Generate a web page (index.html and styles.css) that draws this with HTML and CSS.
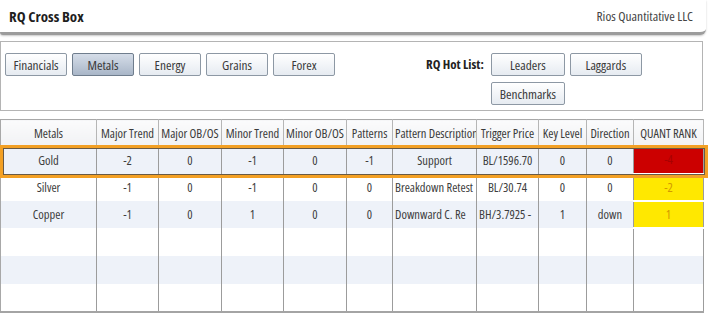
FILE: index.html
```html
<!DOCTYPE html>
<html>
<head>
<meta charset="utf-8">
<link rel="stylesheet" href="styles.css">
</head>
<body>
<div class="page">
  <div class="header">
    <div class="title">RQ Cross Box</div>
    <div class="company">Rios Quantitative LLC</div>
  </div>
  <div class="toolbar">
    <div class="tabs">
      <button class="btn">Financials</button>
      <button class="btn active">Metals</button>
      <button class="btn">Energy</button>
      <button class="btn">Grains</button>
      <button class="btn">Forex</button>
    </div>
    <div class="hotlist">
      <div class="hot-label">RQ Hot List:</div>
      <div class="hot-buttons">
        <button class="btn wide">Leaders</button>
        <button class="btn wide2">Laggards</button>
        <button class="btn wide">Benchmarks</button>
      </div>
    </div>
  </div>
  <table class="grid">
    <colgroup>
      <col class="c1"><col class="c2"><col class="c3"><col class="c4"><col class="c5"><col class="c6"><col class="c7"><col class="c8"><col class="c9"><col class="c10"><col class="c11">
    </colgroup>
    <thead>
      <tr>
        <th>Metals</th><th>Major Trend</th><th>Major OB/OS</th><th>Minor Trend</th><th>Minor OB/OS</th><th>Patterns</th><th>Pattern Description</th><th>Trigger Price</th><th>Key Level</th><th>Direction</th><th>QUANT RANK</th>
      </tr>
    </thead>
    <tbody>
      <tr class="row alt">
        <td>Gold</td><td>-2</td><td>0</td><td>-1</td><td>0</td><td>-1</td><td>Support</td><td>BL/1596.70</td><td>0</td><td>0</td><td class="rank red">-4</td>
      </tr>
      <tr class="row">
        <td>Silver</td><td>-1</td><td>0</td><td>-1</td><td>0</td><td>0</td><td class="left">Breakdown Retest</td><td>BL/30.74</td><td>0</td><td>0</td><td class="rank yellow">-2</td>
      </tr>
      <tr class="row alt">
        <td>Copper</td><td>-1</td><td>0</td><td>1</td><td>0</td><td>0</td><td class="left">Downward C. Re</td><td class="left">BH/3.7925 -</td><td>1</td><td>down</td><td class="rank yellow">1</td>
      </tr>
      <tr class="row empty"><td></td><td></td><td></td><td></td><td></td><td></td><td></td><td></td><td></td><td></td><td></td></tr>
      <tr class="row empty alt"><td></td><td></td><td></td><td></td><td></td><td></td><td></td><td></td><td></td><td></td><td></td></tr>
      <tr class="row empty"><td></td><td></td><td></td><td></td><td></td><td></td><td></td><td></td><td></td><td></td><td></td></tr>
    </tbody>
  </table>
  <div class="highlight"></div>
</div>
</body>
</html>
```

FILE: styles.css
```css
* { box-sizing: border-box; }
html, body {
  margin: 0;
  padding: 0;
  background: #ffffff;
}
body {
  font-family: "Open Sans", "Liberation Sans", sans-serif;
  font-stretch: 75%;
  font-size: 12px;
  color: #3d3d3d;
}
.page {
  position: relative;
  width: 712px;
  height: 326px;
  overflow: hidden;
}
.header {
  width: 706px;
  height: 35px;
  display: flex;
  justify-content: space-between;
  align-items: center;
  padding: 0 13px 1px 9px;
  background: #fff;
  border-bottom: 3px solid #9c9c9c;
  border-bottom-right-radius: 6px;
  border-bottom-left-radius: 3px;
  box-shadow: 0 1px 2px #c8c8c8;
}
.title {
  font-weight: bold;
  font-size: 15px;
  font-stretch: 75%;
  color: #1e1e1e;
}
.company {
  font-size: 13.4px;
  font-stretch: 75%;
  color: #444;
}
.toolbar {
  margin-top: 6px;
  width: 703px;
  height: 70px;
  border: 1px solid #b4b4b4;
  display: flex;
  align-items: flex-start;
  padding: 11px 0 0 4px;
}
.tabs {
  display: flex;
  gap: 5px;
}
.btn {
  font-family: inherit;
  font-stretch: 75%;
  font-size: 13.3px;
  color: #3a3a3a;
  height: 23px;
  width: 62px;
  padding: 0;
  border: 1px solid #8d98a4;
  border-radius: 2px;
  background: linear-gradient(#ffffff, #e6ebf1);
}
.btn.active {
  background: linear-gradient(#d5dde8, #a9b6c8);
  border-color: #6f7d8d;
}
.btn.wide { width: 74px; }
.btn.wide2 { width: 72px; }
.hotlist {
  display: flex;
  align-items: flex-start;
  margin-left: 91px;
}
.hot-label {
  font-weight: bold;
  font-size: 13px;
  font-stretch: 75%;
  color: #222;
  line-height: 23px;
  margin-right: 7px;
}
.hot-buttons {
  width: 152px;
  display: flex;
  flex-wrap: wrap;
  column-gap: 5px;
  row-gap: 6px;
}
.grid {
  margin-top: 8px;
  width: 703px;
  border-collapse: collapse;
  table-layout: fixed;
  border: 1px solid #a8a8a8;
  border-bottom: 2px solid #a4a4a4;
}
.c1 { width: 96px; }
.c2 { width: 62px; }
.c3 { width: 63px; }
.c4 { width: 62px; }
.c5 { width: 63px; }
.c6 { width: 46px; }
.c7 { width: 84px; }
.c8 { width: 62px; }
.c9 { width: 48px; }
.c10 { width: 47px; }
.c11 { width: 70px; }
th {
  height: 27px;
  font-weight: normal;
  font-size: 12.5px;
  color: #3a3a3a;
  background: linear-gradient(#fbfbfc, #f1f2f4);
  border-right: 1px solid #b6b6b6;
  border-bottom: 1px solid #c4c4c4;
  white-space: nowrap;
  overflow: hidden;
  padding: 0 2px;
  text-align: center;
}
td {
  height: 27px;
  text-align: center;
  border-right: 1px solid #9c9c9c;
  white-space: nowrap;
  overflow: hidden;
  padding: 0 2px;
  font-size: 12.5px;
}
td.left { text-align: left; }
.row { background: #ffffff; }
.row.alt { background: #eef2f9; }
.row.empty td { height: 28px; }
td.rank.red {
  background: #cc0000;
  color: #a80000;
  border-bottom: 2px solid #fff;
}
td.rank.yellow {
  background: #ffe800;
  color: #d29a00;
  border-bottom: 2px solid #fff;
}
.highlight {
  position: absolute;
  left: 0;
  top: 145px;
  width: 708px;
  height: 33px;
  border: 3px solid #f3a024;
  box-shadow: inset 0 0 0 1px #6a5a44;
  pointer-events: none;
}
```
